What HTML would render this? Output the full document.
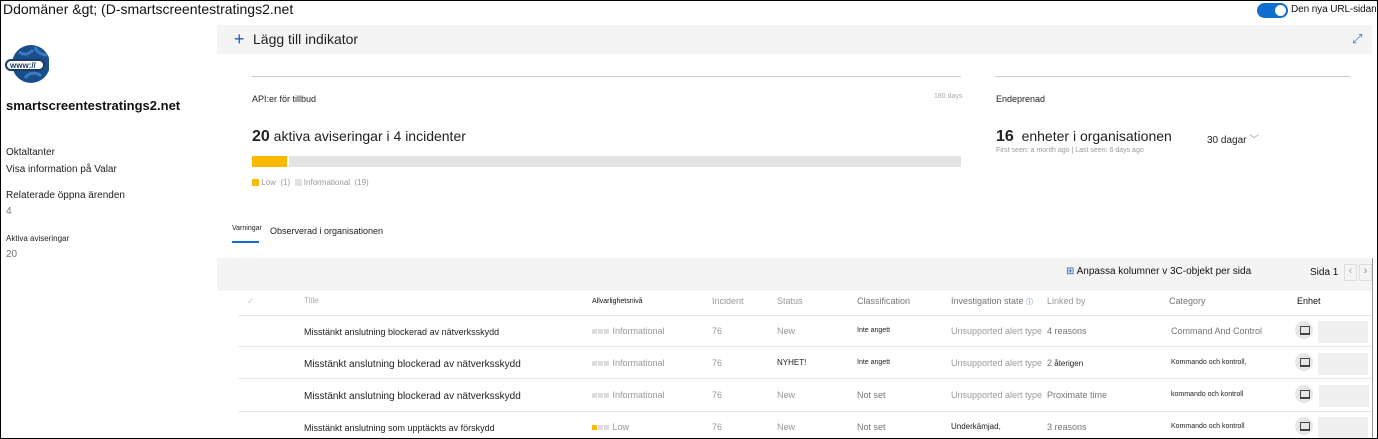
<!DOCTYPE html>
<html><head><meta charset="utf-8"><style>
*{margin:0;padding:0;box-sizing:border-box}
body{width:1378px;height:439px;overflow:hidden;background:#fff;font-family:"Liberation Sans",sans-serif;color:#222;position:relative}
.frame{position:absolute;inset:0;border:1px solid #000;pointer-events:none;z-index:10}
.a{position:absolute;white-space:nowrap}
.g{color:#767676}
.hr{position:absolute;height:1px;background:#e8e8e8}
.sq{display:inline-block;width:5px;height:5px;background:#ddd;margin-right:1px}
.pc{position:absolute;width:18px;height:18px;border-radius:50%;background:#e6e6e6}
.pc:after{content:"";position:absolute;left:5px;top:5px;width:8px;height:6px;border:1px solid #444;border-bottom-width:2px}
.bar{position:absolute;height:22px;background:#efefef}
</style></head><body>
<div class="frame"></div>
<div class="a" style="left:3px;top:1px;font-size:14px;color:#111">Ddomäner &amp;gt; (D-smartscreentestratings2.net</div>
<div class="a" style="left:1257px;top:3px;width:31px;height:15px;border-radius:8px;background:#0f6fce"></div>
<div class="a" style="left:1275px;top:5px;width:11px;height:11px;border-radius:50%;background:#fff"></div>
<div class="a" style="left:1291px;top:4px;font-size:10px;color:#111;letter-spacing:-0.1px">Den nya URL-sidan</div>
<svg class="a" style="left:5px;top:44px" width="44" height="40" viewBox="0 0 44 40"><circle cx="26" cy="20" r="19" fill="#1a4e8a"/><path d="M14 8c6 4 10 2 14-2M30 3c2 6 8 8 12 8M20 34c4-6 12-6 16-2" stroke="#3a7ac0" stroke-width="3" fill="none"/><rect x="1" y="16" width="38" height="10" rx="5" fill="#fff" stroke="#1a3b66" stroke-width="2"/><text x="5" y="24" font-size="8" font-weight="bold" fill="#1a3b66" font-family="Liberation Sans">www://</text></svg>
<div class="a" style="left:6px;top:98px;font-size:13px;font-weight:bold;color:#111">smartscreentestratings2.net</div>
<div class="a" style="left:6px;top:147px;font-size:10px">Oktaltanter</div>
<div class="a" style="left:6px;top:164px;font-size:10px">Visa information på Valar</div>
<div class="a" style="left:6px;top:190px;font-size:10px">Relaterade öppna ärenden</div>
<div class="a g" style="left:6px;top:206px;font-size:10px">4</div>
<div class="a" style="left:6px;top:234px;font-size:8px">Aktiva aviseringar</div>
<div class="a g" style="left:6px;top:249px;font-size:10px">20</div>
<div class="a" style="left:217px;top:25px;width:1155px;height:29px;background:#f4f4f4"></div>
<div class="a" style="left:234px;top:29px;font-size:18px;color:#1a5fb4;font-weight:300">+</div>
<div class="a" style="left:253px;top:31px;font-size:14px;color:#222">Lägg till indikator</div>
<div class="a" style="left:1352px;top:31px;font-size:13px;color:#3a7ac0">⤢</div>
<div class="hr" style="left:252px;top:76px;width:709px;background:#ccc"></div>
<div class="hr" style="left:995px;top:76px;width:355px;background:#ccc"></div>
<div class="a" style="left:252px;top:94px;font-size:9px">API:er för tillbud</div>
<div class="a g" style="left:934px;top:93px;font-size:7px;color:#aaa">180 days</div>
<div class="a" style="left:996px;top:94px;font-size:9px">Endeprenad</div>
<div class="a" style="left:252px;top:128px;font-size:14px"><b style="font-size:16px">20</b> aktiva aviseringar i 4 incidenter</div>
<div class="a" style="left:252px;top:156px;width:35px;height:11px;background:#ffb900"></div>
<div class="a" style="left:289px;top:156px;width:672px;height:11px;background:#e3e3e3"></div>
<div class="a g" style="left:252px;top:178px;font-size:8px;color:#999"><span style="display:inline-block;width:7px;height:7px;background:#ffb900;vertical-align:-1px"></span> Low &nbsp;(1) &nbsp;<span style="display:inline-block;width:7px;height:7px;background:#e3e3e3;vertical-align:-1px"></span> Informational &nbsp;(19)</div>
<div class="a" style="left:996px;top:128px;font-size:14px"><b style="font-size:16px">16</b>&nbsp; enheter i organisationen</div>
<div class="a" style="left:1207px;top:131px;font-size:10px">30 dagar <span style="color:#999">﹀</span></div>
<div class="a g" style="left:996px;top:147px;font-size:7px;color:#999">First seen: a month ago | Last seen: 6 days ago</div>
<div class="a" style="left:232px;top:225px;font-size:7px">Varningar</div>
<div class="a" style="left:270px;top:226px;font-size:9px">Observerad i organisationen</div>
<div class="a" style="left:232px;top:241px;width:27px;height:2px;background:#0f6fce"></div>
<div class="a" style="left:217px;top:258px;width:1155px;height:33px;background:#f4f4f4"></div>
<div class="a" style="left:1066px;top:266px;font-size:10px;color:#111"><span style="color:#1a5fb4">⊞</span> Anpassa kolumner v 3C-objekt per sida</div>
<div class="a" style="left:1310px;top:267px;font-size:10px;color:#111">Sida 1</div>
<div class="a" style="left:1344px;top:264px;width:13px;height:17px;border:1px solid #ddd;font-size:11px;color:#aaa;text-align:center">‹</div>
<div class="a" style="left:1359px;top:264px;width:13px;height:17px;border:1px solid #ddd;font-size:11px;color:#888;text-align:center">›</div>
<div class="a" style="left:1372px;top:258px;width:1px;height:181px;background:#999"></div>
<div class="a" style="left:247px;top:296px;font-size:9px;color:#ccc">✓</div>
<div class="a g" style="left:304px;top:296px;font-size:8px;color:#aaa">Title</div>
<div class="a" style="left:592px;top:298px;font-size:7px;color:#111">Allvarlighetsnivå</div>
<div class="a g" style="left:712px;top:296px;font-size:9px;color:#999">Incident</div>
<div class="a g" style="left:777px;top:296px;font-size:9px;color:#999">Status</div>
<div class="a g" style="left:857px;top:296px;font-size:9px">Classification</div>
<div class="a g" style="left:951px;top:296px;font-size:9px">Investigation state <span style="color:#1a5fb4;font-size:7px">ⓘ</span></div>
<div class="a g" style="left:1047px;top:296px;font-size:9px;color:#999">Linked by</div>
<div class="a g" style="left:1169px;top:296px;font-size:9px">Category</div>
<div class="a" style="left:1297px;top:296px;font-size:9px;color:#111">Enhet</div>
<div class="hr" style="left:238px;top:315px;width:1134px"></div>
<div class="hr" style="left:238px;top:346px;width:1134px"></div>
<div class="hr" style="left:238px;top:378px;width:1134px"></div>
<div class="hr" style="left:238px;top:411px;width:1134px"></div>
<div class="a" style="left:304px;top:327px;font-size:9px">Misstänkt anslutning blockerad av nätverksskydd</div>
<div class="a" style="left:304px;top:359px;font-size:10px">Misstänkt anslutning blockerad av nätverksskydd</div>
<div class="a" style="left:304px;top:391px;font-size:10px">Misstänkt anslutning blockerad av nätverksskydd</div>
<div class="a" style="left:304px;top:423px;font-size:9px">Misstänkt anslutning som upptäckts av förskydd</div>
<div class="a g" style="left:592px;top:326px;font-size:9px;color:#999"><span class="sq"></span><span class="sq"></span><span class="sq"></span> Informational</div>
<div class="a g" style="left:592px;top:358px;font-size:9px;color:#999"><span class="sq"></span><span class="sq"></span><span class="sq"></span> Informational</div>
<div class="a g" style="left:592px;top:390px;font-size:9px;color:#999"><span class="sq"></span><span class="sq"></span><span class="sq"></span> Informational</div>
<div class="a g" style="left:592px;top:422px;font-size:9px;color:#999"><span class="sq" style="background:#ffb900"></span><span class="sq"></span><span class="sq"></span> Low</div>
<div class="a g" style="left:712px;top:326px;font-size:9px;color:#999">76</div>
<div class="a g" style="left:712px;top:358px;font-size:9px;color:#999">76</div>
<div class="a g" style="left:712px;top:390px;font-size:9px;color:#999">76</div>
<div class="a g" style="left:712px;top:422px;font-size:9px;color:#999">76</div>
<div class="a g" style="left:777px;top:326px;font-size:9px;color:#999">New</div>
<div class="a" style="left:777px;top:358px;font-size:8px">NYHET!</div>
<div class="a g" style="left:777px;top:390px;font-size:9px;color:#999">New</div>
<div class="a g" style="left:777px;top:422px;font-size:9px;color:#999">New</div>
<div class="a" style="left:857px;top:327px;font-size:7px">Inte angett</div>
<div class="a" style="left:857px;top:359px;font-size:7px">Inte angett</div>
<div class="a g" style="left:857px;top:390px;font-size:9px">Not set</div>
<div class="a g" style="left:857px;top:422px;font-size:9px">Not set</div>
<div class="a g" style="left:951px;top:326px;font-size:9px;color:#999">Unsupported alert type</div>
<div class="a g" style="left:951px;top:358px;font-size:9px;color:#999">Unsupported alert type</div>
<div class="a g" style="left:951px;top:390px;font-size:9px;color:#999">Unsupported alert type</div>
<div class="a" style="left:951px;top:422px;font-size:8px">Underkämjad,</div>
<div class="a g" style="left:1047px;top:326px;font-size:9px">4 reasons</div>
<div class="a" style="left:1047px;top:358px;font-size:8px"><span class="g" style="font-size:9px">2</span> återigen</div>
<div class="a g" style="left:1047px;top:390px;font-size:9px">Proximate time</div>
<div class="a g" style="left:1047px;top:422px;font-size:9px">3 reasons</div>
<div class="a g" style="left:1171px;top:326px;font-size:9px">Command And Control</div>
<div class="a" style="left:1171px;top:359px;font-size:7px">Kommando och kontroll,</div>
<div class="a" style="left:1171px;top:391px;font-size:7px">kommando och kontroll</div>
<div class="a" style="left:1171px;top:423px;font-size:7px">Kommando och kontroll</div>
<div class="pc" style="left:1295px;top:321px"></div>
<div class="pc" style="left:1295px;top:353px"></div>
<div class="pc" style="left:1295px;top:385px"></div>
<div class="pc" style="left:1295px;top:417px"></div>
<div class="bar" style="left:1318px;top:321px;width:50px"></div>
<div class="bar" style="left:1318px;top:353px;width:50px"></div>
<div class="bar" style="left:1319px;top:385px;width:50px"></div>
<div class="bar" style="left:1318px;top:417px;width:50px"></div>
</body></html>
